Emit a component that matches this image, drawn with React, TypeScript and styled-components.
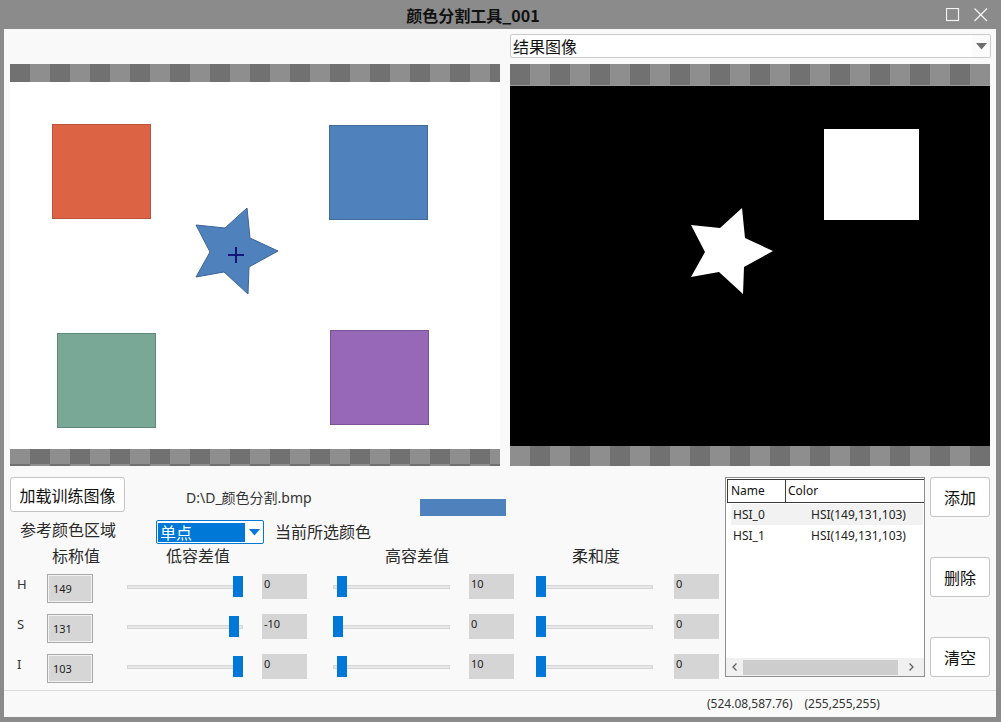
import React from "react";
import styled, { createGlobalStyle } from "styled-components";

const GlobalStyle = createGlobalStyle`
  html, body {
    margin: 0;
    padding: 0;
    background: #8b8b8b;
  }
  body {
    font-family: "Noto Sans", "Noto Sans CJK SC", sans-serif;
    color: #1e1e1e;
  }
`;

const DARK = "#717171";
const LIGHT = "#8e8e8e";
const PARAM_COLUMNS = "37px 80px 135px 71px 136px 67px 138px 46px";

const Window = styled.div`
  width: 1001px;
  height: 722px;
  box-sizing: border-box;
  padding: 0 5px 5px 4px;
  background: #8b8b8b;
  display: flex;
  flex-direction: column;
  overflow: hidden;
`;

const TitleBar = styled.div`
  height: 29px;
  flex: none;
  display: flex;
  align-items: center;
  margin: 0 -5px 0 -4px;
`;

const TitleText = styled.div`
  flex: 1;
  text-align: center;
  font-family: "Noto Sans CJK SC", sans-serif;
  font-weight: 700;
  font-size: 16px;
  line-height: 20px;
  color: #111;
`;

const TitleIcons = styled.div`
  display: flex;
  gap: 14px;
  margin-right: 13px;
`;

const Body = styled.div`
  flex: 1;
  background: #f9f9f9;
  display: flex;
  flex-direction: column;
`;

const ViewGrid = styled.div`
  display: grid;
  grid-template-columns: 490px 480px;
  grid-template-rows: 35px 402px;
  column-gap: 10px;
  padding-left: 6px;
`;

const Combo = styled.div`
  margin-top: 5px;
  height: 24px;
  box-sizing: border-box;
  border: 1px solid #cbcbcb;
  border-radius: 2px;
  background: #fff;
  display: flex;
  align-items: center;
  width: 481px;
`;

const ComboText = styled.div`
  flex: 1;
  padding-left: 2px;
  font-family: "Noto Sans CJK SC", sans-serif;
  font-size: 16px;
  line-height: 22px;
  color: #111;
`;

const ComboArrow = styled.div`
  width: 18px;
  height: 22px;
  display: flex;
  align-items: center;
  justify-content: center;
  background: #fbfbfb;
`;

const Panel = styled.div`
  display: flex;
  flex-direction: column;
  overflow: hidden;
`;

const Checker = styled.div<{ $h: number; $lightFirst?: boolean }>`
  height: ${(p) => p.$h}px;
  flex: none;
  background: repeating-linear-gradient(
    90deg,
    ${(p) => (p.$lightFirst ? LIGHT : DARK)} 0 20px,
    ${(p) => (p.$lightFirst ? DARK : LIGHT)} 20px 40px
  );
`;

const CheckerLined = styled(Checker)`
  border-bottom: 1px solid #9a9a9a;
`;

const ImageArea = styled.div<{ $bg: string; $h: number }>`
  height: ${(p) => p.$h}px;
  flex: none;
  background: ${(p) => p.$bg};
  svg {
    display: block;
  }
`;

const Controls = styled.div`
  height: 224px;
  box-sizing: border-box;
  padding: 11px 0 0 6px;
  display: flex;
`;

const LeftControls = styled.div`
  width: 715px;
  display: flex;
  flex-direction: column;
`;

const TopRow = styled.div`
  height: 35px;
  display: flex;
  align-items: flex-start;
`;

const PushButton = styled.div<{ $w: number; $h: number }>`
  width: ${(p) => p.$w}px;
  height: ${(p) => p.$h}px;
  box-sizing: border-box;
  border: 1px solid #c4c4c4;
  border-radius: 3px;
  background: #fff;
  display: flex;
  align-items: center;
  justify-content: center;
  font-family: "Noto Sans CJK SC", sans-serif;
  font-size: 16px;
  color: #111;
`;

const FileName = styled.div`
  margin: 12px 0 0 61px;
  font-size: 14px;
  line-height: 18px;
  color: #333;
  width: 123px;
  white-space: nowrap;
`;

const Swatch = styled.div<{ $color: string }>`
  margin: 22px 0 0 111px;
  width: 86px;
  height: 17px;
  background: ${(p) => p.$color};
`;

const ModeRow = styled.div`
  margin-top: 6px;
  height: 26px;
  display: flex;
  align-items: flex-end;
`;

const CnLabel = styled.div<{ $w?: number; $indent?: number }>`
  ${(p) => (p.$w ? `width: ${p.$w}px;` : "")}
  box-sizing: border-box;
  padding-left: ${(p) => p.$indent ?? 0}px;
  font-family: "Noto Sans CJK SC", sans-serif;
  font-size: 16px;
  line-height: 22px;
  color: #2a2a2a;
  align-self: flex-start;
  white-space: nowrap;
`;

const ModeCombo = styled.div`
  width: 108px;
  height: 24px;
  box-sizing: border-box;
  border: 1px solid #0078d7;
  border-radius: 2px;
  background: #fff;
  display: flex;
  align-items: center;
  padding: 0 0 0 1px;
`;

const ModeSelected = styled.div`
  width: 87px;
  height: 19px;
  background: #0078d7;
  color: #fff;
  font-family: "Noto Sans CJK SC", sans-serif;
  font-size: 16px;
  line-height: 19px;
  padding-left: 2px;
  box-sizing: border-box;
`;

const ModeArrow = styled.div`
  flex: 1;
  display: flex;
  justify-content: center;
`;

const CurrentLabel = styled(CnLabel)`
  margin-left: 11px;
  align-self: center;
`;

const HeadRow = styled.div`
  display: grid;
  grid-template-columns: ${PARAM_COLUMNS};
  height: 24px;
`;

const HeadLabel = styled.div<{ $col: number; $indent: number }>`
  grid-column: ${(p) => p.$col};
  padding-left: ${(p) => p.$indent}px;
  font-family: "Noto Sans CJK SC", sans-serif;
  font-size: 16px;
  line-height: 22px;
  color: #2a2a2a;
  white-space: nowrap;
`;

const ParamGrid = styled.div`
  display: grid;
  grid-template-columns: ${PARAM_COLUMNS};
  grid-auto-rows: 40px;
`;

const ChannelLabel = styled.div`
  padding-left: 7px;
  margin-top: 8px;
  font-size: 13px;
  line-height: 16px;
  color: #333;
`;

const NominalBox = styled.div`
  width: 46px;
  height: 29px;
  margin-top: 6px;
  box-sizing: border-box;
  border: 1px solid #a9a9a9;
  box-shadow: inset 0 0 0 1px #f2f2f2;
  background: #d6d6d6;
  font-size: 11px;
  line-height: 27px;
  padding-left: 5px;
  color: #222;
`;

const ValueBox = styled.div`
  width: 45px;
  height: 25px;
  margin-top: 6px;
  box-sizing: border-box;
  background: #d5d5d5;
  font-size: 11px;
  line-height: 16px;
  padding: 2px 0 0 2px;
  color: #222;
`;

const Slider = styled.div<{ $w: number }>`
  position: relative;
  width: ${(p) => p.$w}px;
  height: 40px;
  &::before {
    content: "";
    position: absolute;
    left: 0;
    right: 0;
    top: 17px;
    height: 4px;
    box-sizing: border-box;
    background: #e7e7e7;
    border: 1px solid #d6d6d6;
  }
`;

const Thumb = styled.div<{ $left: number }>`
  position: absolute;
  top: 8px;
  left: ${(p) => p.$left}px;
  width: 10px;
  height: 21px;
  background: #0078d7;
`;

const ListBox = styled.div`
  width: 200px;
  height: 200px;
  box-sizing: border-box;
  border: 1px solid #8f8f8f;
  background: #fff;
  display: flex;
  flex-direction: column;
  overflow: hidden;
`;

const ListHeader = styled.div`
  display: flex;
  height: 24px;
  margin: 1px 0 0 1px;
`;

const HeadCell = styled.div<{ $w?: number }>`
  ${(p) => (p.$w ? `width: ${p.$w}px;` : "flex: 1;")}
  box-sizing: border-box;
  border: 1px solid #3c3c3c;
  ${(p) => (p.$w ? "" : "border-left: none; border-right: none;")}
  font-size: 12px;
  line-height: 22px;
  padding-left: ${(p) => (p.$w ? 3 : 2)}px;
  color: #111;
`;

const ListRows = styled.div`
  margin: 1px 1px 0 5px;
`;

const ListRow = styled.div<{ $alt?: boolean }>`
  height: 21px;
  display: flex;
  align-items: center;
  background: ${(p) => (p.$alt ? "#f2f2f2" : "transparent")};
  font-size: 12px;
  color: #222;
  padding-left: 2px;
`;

const NameCol = styled.div`
  width: 78px;
`;

const HScroll = styled.div`
  margin-top: auto;
  height: 18px;
  display: flex;
  align-items: center;
  background: #f0f0f0;
`;

const ScrollArrow = styled.div<{ $w: number }>`
  width: ${(p) => p.$w}px;
  display: flex;
  justify-content: center;
`;

const ScrollThumb = styled.div`
  width: 155px;
  height: 15px;
  background: #cdcdcd;
`;

const ButtonColumn = styled.div`
  margin-left: 5px;
  height: 200px;
  display: flex;
  flex-direction: column;
  justify-content: space-between;
`;

const StatusBar = styled.div`
  flex: 1;
  border-top: 1px solid #dcdcdc;
  padding-left: 703px;
  display: flex;
  gap: 12px;
  font-size: 12px;
  line-height: 26px;
  color: #333;
`;

const params = [
  { ch: "H", nom: "149", low: 106, lowVal: "0", high: 4, highVal: "10", soft: 0, softVal: "0" },
  { ch: "S", nom: "131", low: 102, lowVal: "-10", high: 0, highVal: "0", soft: 0, softVal: "0" },
  { ch: "I", nom: "103", low: 106, lowVal: "0", high: 4, highVal: "10", soft: 0, softVal: "0" },
];

const colorItems = [
  { name: "HSI_0", color: "HSI(149,131,103)" },
  { name: "HSI_1", color: "HSI(149,131,103)" },
];

// star outline in source-image coordinates (left view)
const starPts: [number, number][] = [
  [268, 169], [240, 156], [237, 126], [215, 146], [186, 143],
  [200, 170], [186, 195], [214, 190], [238, 212], [239, 185],
];

const toPoints = (pts: [number, number][], dx: number, dy: number) =>
  pts.map(([x, y]) => `${x + dx},${y + dy}`).join(" ");

const DownArrow = ({ color }: { color: string }) => (
  <svg width="11" height="7" viewBox="0 0 11 7">
    <polygon points="0,0 11,0 5.5,6.5" fill={color} />
  </svg>
);

const Chevron = ({ dir }: { dir: "l" | "r" }) => (
  <svg width="5" height="8" viewBox="0 0 5 8">
    <polyline
      points={dir === "l" ? "4.5,0.5 1,4 4.5,7.5" : "0.5,0.5 4,4 0.5,7.5"}
      fill="none"
      stroke="#606060"
      strokeWidth="1.3"
    />
  </svg>
);

const SourceImage = () => (
  <svg width="490" height="367" viewBox="0 0 490 367">
    <rect x="42.5" y="42.5" width="98" height="94" fill="#dc6445" stroke="#b9533b" />
    <rect x="319.5" y="43.5" width="98" height="94" fill="#4f81bd" stroke="#41699a" />
    <rect x="47.5" y="251.5" width="98" height="94" fill="#79a897" stroke="#5f8878" />
    <rect x="320.5" y="248.5" width="98" height="94" fill="#9768b7" stroke="#7a5396" />
    <polygon points={toPoints(starPts, 0, 0)} fill="#4f81bd" stroke="#3d6591" strokeWidth="1" />
    <line x1="218" y1="173" x2="234" y2="173" stroke="#15157a" strokeWidth="2" />
    <line x1="226" y1="165" x2="226" y2="181" stroke="#15157a" strokeWidth="2" />
  </svg>
);

const ResultImage = () => (
  <svg width="480" height="360" viewBox="0 0 480 360">
    <rect x="314" y="43" width="95" height="91" fill="#fff" />
    <polygon points={toPoints(starPts, -5, -4)} fill="#fff" />
  </svg>
);

export default function App() {
  return (
    <>
      <GlobalStyle />
      <Window>
        <TitleBar>
          <TitleText>颜色分割工具_001</TitleText>
          <TitleIcons>
            <svg width="14" height="14" viewBox="0 0 14 14">
              <rect x="0.5" y="0.5" width="12" height="12" fill="none" stroke="#f4f4f4" strokeWidth="1.2" />
            </svg>
            <svg width="14" height="14" viewBox="0 0 14 14">
              <line x1="0.5" y1="0.5" x2="13" y2="13" stroke="#f4f4f4" strokeWidth="1.3" />
              <line x1="13" y1="0.5" x2="0.5" y2="13" stroke="#f4f4f4" strokeWidth="1.3" />
            </svg>
          </TitleIcons>
        </TitleBar>
        <Body>
          <ViewGrid>
            <div />
            <Combo>
              <ComboText>结果图像</ComboText>
              <ComboArrow>
                <DownArrow color="#6e6e6e" />
              </ComboArrow>
            </Combo>
            <Panel>
              <Checker $h={18} />
              <ImageArea $bg="#fff" $h={367}>
                <SourceImage />
              </ImageArea>
              <Checker $h={15} $lightFirst />
              <Checker $h={2} />
            </Panel>
            <Panel>
              <CheckerLined $h={21} />
              <ImageArea $bg="#000" $h={360}>
                <ResultImage />
              </ImageArea>
              <Checker $h={21} $lightFirst />
            </Panel>
          </ViewGrid>

          <Controls>
            <LeftControls>
              <TopRow>
                <PushButton $w={115} $h={35}>加载训练图像</PushButton>
                <FileName>D:\D_颜色分割.bmp</FileName>
                <Swatch $color="#4f81bd" />
              </TopRow>
              <ModeRow>
                <CnLabel $w={146} $indent={10}>参考颜色区域</CnLabel>
                <ModeCombo>
                  <ModeSelected>单点</ModeSelected>
                  <ModeArrow>
                    <DownArrow color="#0078d7" />
                  </ModeArrow>
                </ModeCombo>
                <CurrentLabel>当前所选颜色</CurrentLabel>
              </ModeRow>
              <HeadRow>
                <HeadLabel $col={2} $indent={5}>标称值</HeadLabel>
                <HeadLabel $col={3} $indent={39}>低容差值</HeadLabel>
                <HeadLabel $col={5} $indent={52}>高容差值</HeadLabel>
                <HeadLabel $col={7} $indent={36}>柔和度</HeadLabel>
              </HeadRow>
              <ParamGrid>
                {params.map((p) => (
                  <React.Fragment key={p.ch}>
                    <ChannelLabel>{p.ch}</ChannelLabel>
                    <NominalBox>{p.nom}</NominalBox>
                    <Slider $w={116}>
                      <Thumb $left={p.low} />
                    </Slider>
                    <ValueBox>{p.lowVal}</ValueBox>
                    <Slider $w={117}>
                      <Thumb $left={p.high} />
                    </Slider>
                    <ValueBox>{p.highVal}</ValueBox>
                    <Slider $w={117}>
                      <Thumb $left={p.soft} />
                    </Slider>
                    <ValueBox>{p.softVal}</ValueBox>
                  </React.Fragment>
                ))}
              </ParamGrid>
            </LeftControls>

            <ListBox>
              <ListHeader>
                <HeadCell $w={59}>Name</HeadCell>
                <HeadCell>Color</HeadCell>
              </ListHeader>
              <ListRows>
                {colorItems.map((it, i) => (
                  <ListRow key={it.name} $alt={i === 0}>
                    <NameCol>{it.name}</NameCol>
                    <div>{it.color}</div>
                  </ListRow>
                ))}
              </ListRows>
              <HScroll>
                <ScrollArrow $w={17}>
                  <Chevron dir="l" />
                </ScrollArrow>
                <ScrollThumb />
                <ScrollArrow $w={26}>
                  <Chevron dir="r" />
                </ScrollArrow>
              </HScroll>
            </ListBox>

            <ButtonColumn>
              <PushButton $w={60} $h={40}>添加</PushButton>
              <PushButton $w={60} $h={40}>删除</PushButton>
              <PushButton $w={60} $h={40}>清空</PushButton>
            </ButtonColumn>
          </Controls>

          <StatusBar>
            <span>(524.08,587.76)</span>
            <span>(255,255,255)</span>
          </StatusBar>
        </Body>
      </Window>
    </>
  );
}
